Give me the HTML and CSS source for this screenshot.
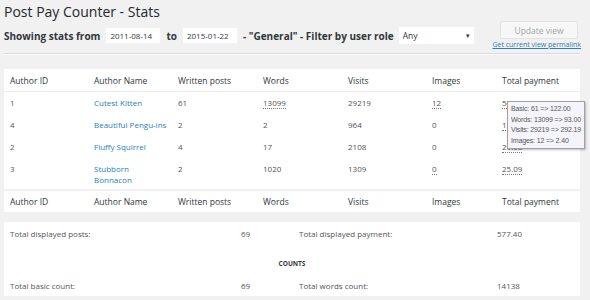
FILE: index.html
```html
<!DOCTYPE html>
<html lang="en">
<head>
    <meta charset="UTF-8">
    <title>Post Pay Counter - Stats</title>
    <link rel="stylesheet" href="styles.css">
</head>
<body>
    <div class="page-head">
        <div class="head-left">
            <h1 class="page-title">Post Pay Counter - Stats</h1>
            <div class="filter-row">
                <span class="filter-label">Showing stats from</span>
                <input class="date-input" type="text" value="2011-08-14">
                <span class="filter-label">to</span>
                <input class="date-input" type="text" value="2015-01-22">
                <span class="filter-label">- "General" - Filter by user role</span>
                <div class="role-select">Any <span class="caret">&#9662;</span></div>
            </div>
        </div>
        <div class="head-right">
            <button class="update-btn">Update view</button>
            <a class="permalink" href="#">Get current view permalink</a>
        </div>
    </div>
    <div class="divider"></div>

    <div class="stats-wrap">
        <table class="stats-table">
            <colgroup>
                <col style="width:84px"><col style="width:84px"><col style="width:85px"><col style="width:85px"><col style="width:84px"><col style="width:70px"><col style="width:84px">
            </colgroup>
            <thead>
                <tr><th>Author ID</th><th>Author Name</th><th>Written posts</th><th>Words</th><th>Visits</th><th>Images</th><th>Total payment</th></tr>
            </thead>
            <tbody>
                <tr><td>1</td><td class="name"><a href="#">Cutest Kitten</a></td><td>61</td><td><span class="tip">13099</span></td><td>29219</td><td><span class="tip">12</span></td><td><span class="tip">509.59</span></td></tr>
                <tr><td>4</td><td class="name"><a href="#">Beautiful Pengu-ins</a></td><td>2</td><td>2</td><td>964</td><td>0</td><td><span class="tip">13.64</span></td></tr>
                <tr><td>2</td><td class="name"><a href="#">Fluffy Squirrel</a></td><td>4</td><td>17</td><td>2108</td><td>0</td><td><span class="tip">29.08</span></td></tr>
                <tr><td>3</td><td class="name"><a href="#">Stubborn Bonnacon</a></td><td>2</td><td>1020</td><td>1309</td><td><span class="tip">0</span></td><td><span class="tip">25.09</span></td></tr>
            </tbody>
            <tfoot>
                <tr><th>Author ID</th><th>Author Name</th><th>Written posts</th><th>Words</th><th>Visits</th><th>Images</th><th>Total payment</th></tr>
            </tfoot>
        </table>
        <div class="tooltip">
            Basic: 61 =&gt; 122.00<br>
            Words: 13099 =&gt; 93.00<br>
            Visits: 29219 =&gt; 292.19<br>
            Images: 12 =&gt; 2.40
        </div>
    </div>

    <table class="overall-table">
        <colgroup>
            <col style="width:231px"><col style="width:58px"><col style="width:198px"><col style="width:89px">
        </colgroup>
        <tr><td>Total displayed posts:</td><td>69</td><td>Total displayed payment:</td><td>577.40</td></tr>
        <tr><td colspan="4" class="section-title">COUNTS</td></tr>
        <tr><td>Total basic count:</td><td>69</td><td>Total words count:</td><td>14138</td></tr>
    </table>
</body>
</html>
```

FILE: styles.css
```css
body {
    background-color: #f1f1f1;
    color: #555;
    font-family: 'Open Sans', sans-serif;
    margin: 0;
    padding: 0 10px 0 4px;
    overflow: hidden;
}

.page-head {
    display: flex;
    justify-content: space-between;
}
.head-left {
    flex-shrink: 0;
}
.page-title {
    font-size: 14px;
    font-weight: 400;
    line-height: 20px;
    color: #23282d;
    margin: 2px 0 5px;
}
.filter-row {
    display: flex;
    align-items: center;
    gap: 4px;
    height: 17px;
    white-space: nowrap;
}
.filter-label {
    font-size: 10px;
    font-weight: bold;
    color: #32373c;
}
.date-input {
    width: 56px;
    height: 17px;
    box-sizing: border-box;
    border: 1px solid #f3f3f3;
    background: #fff;
    font-family: 'Open Sans', sans-serif;
    font-size: 8px;
    color: #32373c;
    padding: 0 4px;
    margin: 0 1px;
}
.role-select {
    width: 75px;
    height: 17px;
    box-sizing: border-box;
    background: #fff;
    font-size: 8.5px;
    color: #32373c;
    padding: 0 4px;
    display: flex;
    align-items: center;
    justify-content: space-between;
    margin-left: 1px;
}
.caret {
    font-size: 7px;
    color: #333;
}

.head-right {
    display: flex;
    flex-direction: column;
    align-items: flex-end;
    padding-top: 21px;
    white-space: nowrap;
}
.update-btn {
    width: 78px;
    height: 18px;
    margin-right: 2px;
    background: #f7f7f7;
    border: 1px solid #e2e2e2;
    border-radius: 2px;
    color: #a0a5aa;
    font-family: 'Open Sans', sans-serif;
    font-size: 8.5px;
    padding: 0;
}
.permalink {
    font-size: 7px;
    line-height: 9px;
    color: #2a80b9;
    margin-right: -1px;
    margin-top: 1px;
}

.divider {
    margin-top: 4px;
    border-top: 1px solid #dcdcdc;
    border-bottom: 1px solid #f9f9f9;
}

.stats-wrap {
    position: relative;
    margin-top: 14px;
}
.stats-table {
    width: 576px;
    table-layout: fixed;
    border-collapse: collapse;
    background: #fff;
    font-size: 8.5px;
    line-height: 11px;
}
.stats-table th {
    text-align: left;
    font-weight: 400;
    color: #32373c;
    padding: 6px 6px 5px;
    white-space: nowrap;
}
.stats-table tfoot th {
    padding: 5px 6px;
}
.stats-table td {
    font-size: 8px;
    padding: 5px 0 6px 6px;
    vertical-align: top;
}
.stats-table td.name {
    padding-right: 4.5px;
}
.stats-table tbody tr:last-child td {
    padding-bottom: 4px;
}
.stats-table thead tr {
    border-bottom: 1px solid #ececec;
}
.stats-table tfoot tr {
    border-top: 2px solid #f1f1f1;
}
.stats-table a {
    color: #2a80b9;
    text-decoration: none;
}
.tip {
    border-bottom: 1px dotted #777;
}

.tooltip {
    position: absolute;
    left: 503px;
    top: 32px;
    padding: 2px 3px;
    background: #f4f4fa;
    border: 1px solid #a0a0a0;
    box-shadow: 1px 1px 2px rgba(0, 0, 0, 0.25);
    font-family: 'Liberation Sans', sans-serif;
    font-size: 7px;
    letter-spacing: -0.15px;
    line-height: 10.5px;
    color: #575757;
    white-space: nowrap;
}

.overall-table {
    margin-top: 10px;
    width: 576px;
    table-layout: fixed;
    border-collapse: collapse;
    background: #fff;
    font-size: 8px;
    line-height: 11px;
}
.overall-table td {
    padding: 5.5px 6px;
}
.section-title {
    text-align: center;
    font-size: 6.5px;
    font-weight: bold;
    color: #32373c;
    padding-top: 13.5px !important;
}
```
